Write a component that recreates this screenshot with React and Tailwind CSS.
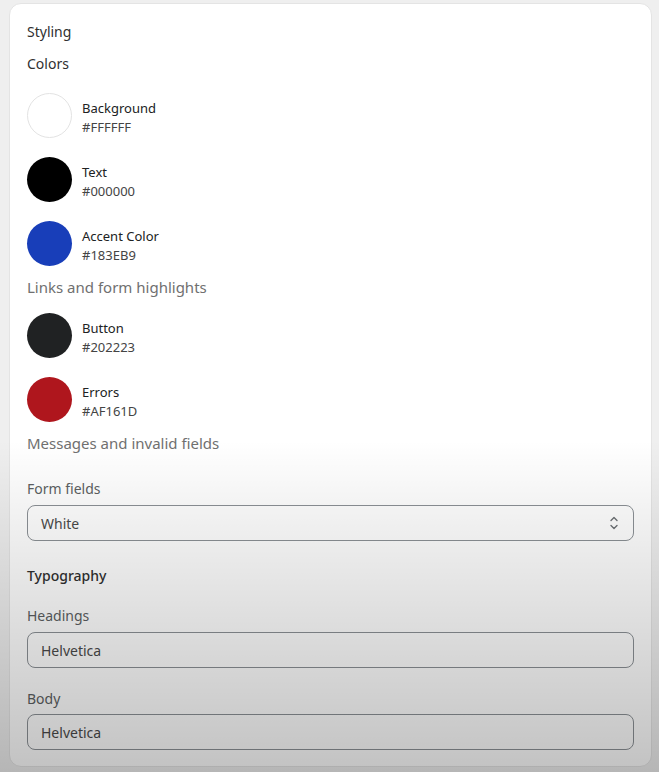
const colors = [
  { name: 'Background', hex: '#FFFFFF', swatch: 'bg-white border border-[#e3e3e3]' },
  { name: 'Text', hex: '#000000', swatch: 'bg-black' },
  { name: 'Accent Color', hex: '#183EB9', swatch: 'bg-[#183eb9]' },
]

const colors2 = [
  { name: 'Button', hex: '#202223', swatch: 'bg-[#202223]' },
  { name: 'Errors', hex: '#AF161D', swatch: 'bg-[#af161d]' },
]

function Swatch({ name, hex, swatch }) {
  return (
    <div className="flex items-center gap-[10px] h-[45px]">
      <div className={`w-[45px] h-[45px] rounded-full shrink-0 ${swatch}`} />
      <div className="flex flex-col text-[13px] leading-[19px] text-[#202223] pt-[4px]">
        <span>{name}</span>
        <span className="text-[#444]">{hex}</span>
      </div>
    </div>
  )
}

function UpDown() {
  return (
    <svg width="10" height="16" viewBox="0 0 10 16" fill="none" stroke="#6d7175" strokeWidth="1.4" strokeLinecap="round" strokeLinejoin="round">
      <path d="M2 5.5 L5 2.5 L8 5.5" />
      <path d="M2 10.5 L5 13.5 L8 10.5" />
    </svg>
  )
}

export default function App() {
  return (
    <div className="relative min-h-screen bg-[#efefef] pt-[3px] px-[9px] font-['Noto_Sans','Open_Sans',sans-serif]">
      <div className="w-[643px] h-[764px] bg-white rounded-[12px] border border-[#e4e4e4] px-[17px] pt-[18px]">
        <p className="text-[14px] leading-[20px] text-[#303030]">Styling</p>
        <p className="mt-[12px] text-[14px] leading-[20px] text-[#303030]">Colors</p>

        {/* Color swatches */}
        <div className="mt-[19px] flex flex-col gap-[19px]">
          {colors.map((c) => <Swatch key={c.name} {...c} />)}
        </div>
        <p className="mt-[10px] text-[15px] leading-[22px] text-[#707070]">Links and form highlights</p>

        <div className="mt-[15px] flex flex-col gap-[19px]">
          {colors2.map((c) => <Swatch key={c.name} {...c} />)}
        </div>
        <p className="mt-[10px] text-[15px] leading-[22px] text-[#707070]">Messages and invalid fields</p>

        {/* Form fields */}
        <p className="mt-[25px] text-[14px] leading-[20px] text-[#5c5f62]">Form fields</p>
        <div className="mt-[6px] h-[36px] rounded-[8px] border border-[#8c9196] flex items-center justify-between pl-[13px] pr-[14px] text-[14px] text-[#4a4a4a]">
          <span>White</span>
          <UpDown />
        </div>

        {/* Typography */}
        <p className="mt-[25px] text-[14px] leading-[20px] font-medium text-[#303030]">Typography</p>
        <p className="mt-[20px] text-[14px] leading-[20px] text-[#5c5f62]">Headings</p>
        <div className="mt-[6px] h-[36px] rounded-[8px] border border-[#8c9196] flex items-center pl-[13px] text-[14px] text-[#4a4a4a]">
          Helvetica
        </div>
        <p className="mt-[21px] text-[14px] leading-[20px] text-[#5c5f62]">Body</p>
        <div className="mt-[5px] h-[36px] rounded-[8px] border border-[#8c9196] flex items-center pl-[13px] text-[14px] text-[#4a4a4a]">
          Helvetica
        </div>
      </div>

      {/* dim overlay toward the bottom */}
      <div className="pointer-events-none absolute inset-0 bg-[linear-gradient(to_bottom,rgba(0,0,0,0)_57%,rgba(0,0,0,0.24))]" />
    </div>
  )
}
